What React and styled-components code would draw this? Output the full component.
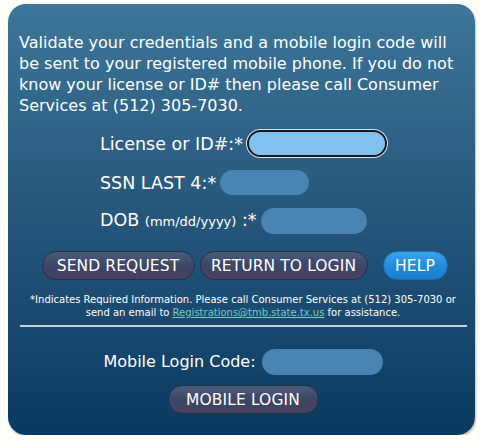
import React from "react";
import styled, { createGlobalStyle } from "styled-components";

const GlobalStyle = createGlobalStyle`
  html, body {
    margin: 0;
    padding: 0;
    background: #fffff9;
  }
  body {
    font-family: "DejaVu Sans", Verdana, sans-serif;
  }
`;

const Panel = styled.div`
  box-sizing: border-box;
  width: 467px;
  height: 431px;
  margin: 4px 0 0 8px;
  padding: 28px 8px 0 11px;
  border-radius: 18px;
  background: linear-gradient(to bottom, #3d7698 0%, #28597d 45%, #0b3a60 100%);
  box-shadow: 1px 2px 2px rgba(0, 0, 0, 0.25);
  color: #ffffff;
`;

const Intro = styled.p`
  margin: 0;
  font-size: 16px;
  line-height: 21px;
`;

const Form = styled.div`
  display: flex;
  flex-direction: column;
  gap: 13px;
  margin-top: 14px;
  padding-left: 81px;
`;

const Row = styled.div`
  display: flex;
  align-items: center;
  gap: ${(p) => p.$gap || 4}px;
`;

const Label = styled.label`
  font-size: ${(p) => p.$size || 17.5}px;
  line-height: 20px;
  white-space: nowrap;

  small {
    font-size: 13px;
  }
`;

const Field = styled.input`
  box-sizing: border-box;
  width: ${(p) => p.$w}px;
  height: ${(p) => p.$h || 26}px;
  border-radius: 14px;
  border: none;
  outline: none;
  background: #4a84b3;
  font-family: inherit;

  ${(p) =>
    p.$focused &&
    `
    background: #80c1ef;
    border: 2px solid #161a1e;
    box-shadow: 0 0 0 1px #d8e6ef;
  `}
`;

const ButtonRow = styled.div`
  display: flex;
  align-items: center;
  justify-content: center;
  gap: 5px;
  margin-top: 17px;
  padding-left: 3px;
`;

const Button = styled.button`
  box-sizing: border-box;
  width: ${(p) => p.$w}px;
  height: 29px;
  padding: 0;
  border-radius: 15px;
  border: 1px solid #23304a;
  background: linear-gradient(to bottom, #4d5d7d 0%, #3c4666 50%, #4a3f60 100%);
  color: #ffffff;
  font-family: inherit;
  font-size: 15.5px;
  letter-spacing: 0.1px;
  white-space: nowrap;
  cursor: pointer;
`;

const HelpButton = styled(Button)`
  margin-left: 10px;
  border: 1px solid #1a6fb4;
  background: linear-gradient(to bottom, #3ba2ec 0%, #2089d9 60%, #1a7dcc 100%);
`;

const Note = styled.p`
  margin: 13px 0 0;
  text-align: center;
  font-size: 10px;
  line-height: 13px;
  white-space: nowrap;

  a {
    color: #72ccc2;
  }
`;

const Divider = styled.hr`
  margin: 6px 0 0 1px;
  border: none;
  height: 2px;
  background: #c9d3da;
`;

const MobileBlock = styled.div`
  display: flex;
  flex-direction: column;
  align-items: center;
  gap: 10px;
  margin-top: 22px;
`;

export default function App() {
  return (
    <>
      <GlobalStyle />
      <Panel>
        <Intro>
          Validate your credentials and a mobile login code will be sent to
          your registered mobile phone. If you do not know your license or ID#
          then please call Consumer Services at (512) 305-7030.
        </Intro>

        <Form>
          <Row>
            <Label>License or ID#:*</Label>
            <Field $w={140} $h={27} $focused />
          </Row>
          <Row>
            <Label>SSN LAST 4:*</Label>
            <Field $w={89} $h={25} />
          </Row>
          <Row>
            <Label>
              DOB <small>(mm/dd/yyyy)</small> :*
            </Label>
            <Field $w={106} />
          </Row>
        </Form>

        <ButtonRow>
          <Button $w={153}>SEND REQUEST</Button>
          <Button $w={168}>RETURN TO LOGIN</Button>
          <HelpButton $w={65}>HELP</HelpButton>
        </ButtonRow>

        <Note>
          *Indicates Required Information. Please call Consumer Services at
          (512) 305-7030 or
          <br />
          send an email to{" "}
          <a href="#">Registrations@tmb.state.tx.us</a> for assistance.
        </Note>

        <Divider />

        <MobileBlock>
          <Row $gap={6}>
            <Label $size={16}>Mobile Login Code:</Label>
            <Field $w={121} />
          </Row>
          <Button $w={151}>MOBILE LOGIN</Button>
        </MobileBlock>
      </Panel>
    </>
  );
}
